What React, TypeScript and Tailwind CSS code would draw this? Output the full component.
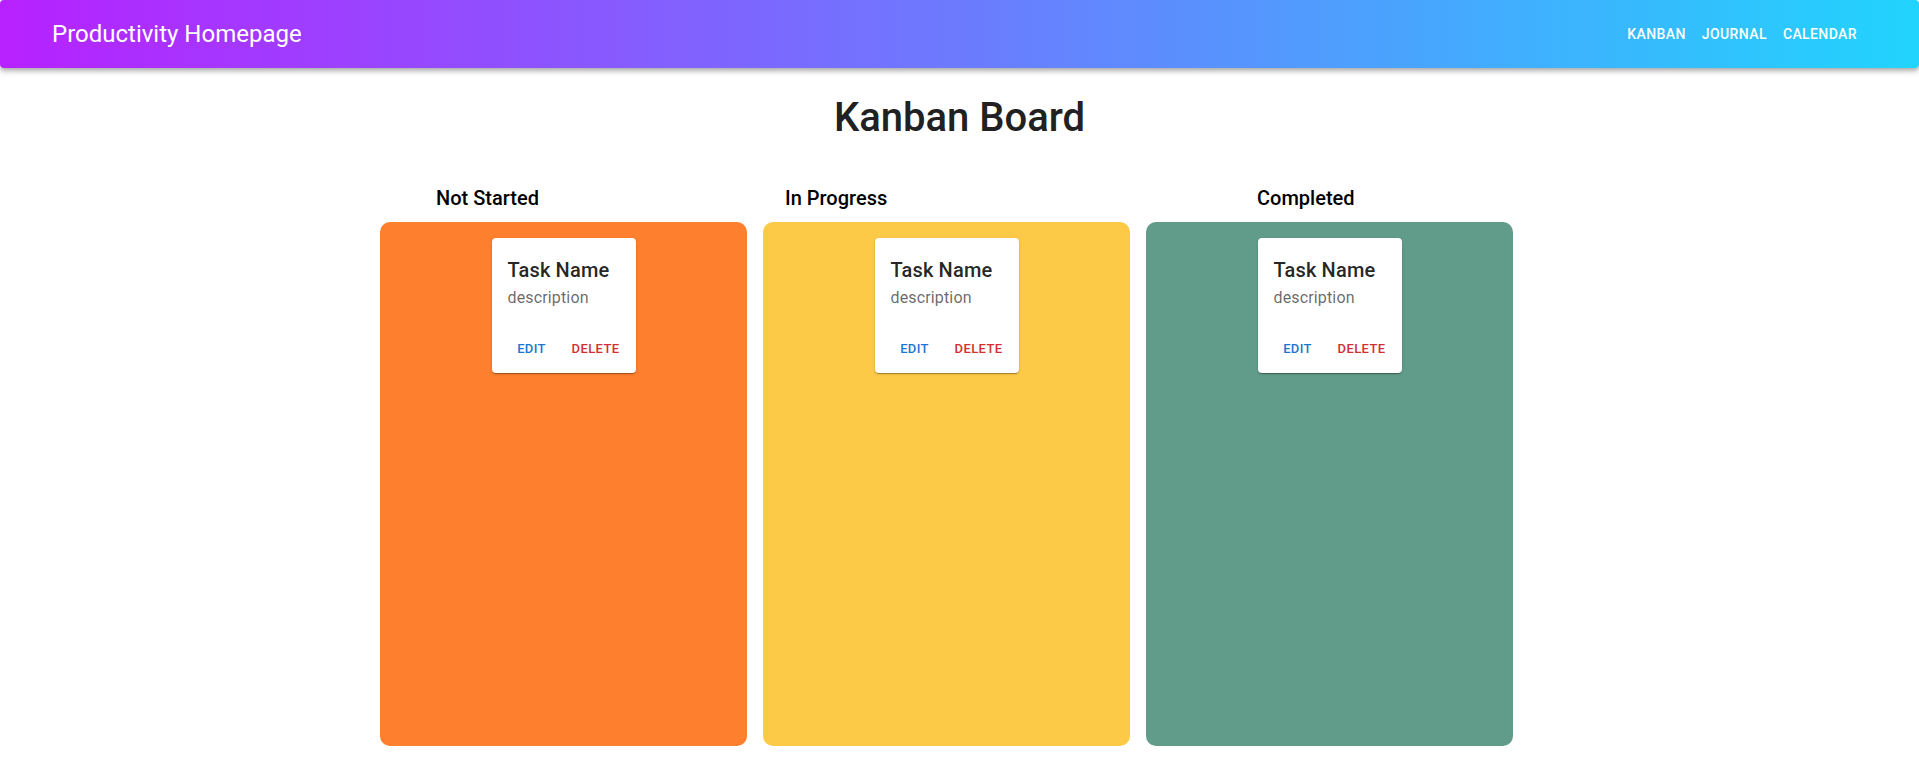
import React from "react";

type Column = {
  title: string;
  color: string;
  titleIndent: string;
};

const columns: Column[] = [
  { title: "Not Started", color: "bg-[#fe7f2d]", titleIndent: "pl-[56px]" },
  { title: "In Progress", color: "bg-[#fcca46]", titleIndent: "pl-[22px]" },
  { title: "Completed", color: "bg-[#619b8a]", titleIndent: "pl-[111px]" },
];

const navLinks = ["Kanban", "Journal", "Calendar"];

function TaskCard() {
  return (
    <div className="w-fit rounded-[4px] bg-white text-[rgba(0,0,0,0.87)] shadow-[0_2px_1px_-1px_rgba(0,0,0,0.2),0_1px_1px_0_rgba(0,0,0,0.14),0_1px_3px_0_rgba(0,0,0,0.12)]">
      <div className="p-4">
        <div className="text-[20px] leading-[32px] font-medium tracking-[0.15px]">
          Task Name
        </div>
        <div className="text-[16px] leading-[24px] tracking-[0.15px] text-[rgba(0,0,0,0.6)]">
          description
        </div>
      </div>
      <div className="flex items-center p-2">
        <button className="min-w-16 px-[5px] py-1 rounded-[4px] text-[13px] leading-[1.75] font-medium uppercase tracking-[0.37px] text-[#1976d2]">
          Edit
        </button>
        <button className="min-w-16 px-[5px] py-1 rounded-[4px] text-[13px] leading-[1.75] font-medium uppercase tracking-[0.37px] text-[#d32f2f]">
          Delete
        </button>
      </div>
    </div>
  );
}

export default function App() {
  return (
    <div className="min-h-[768px] bg-white font-['Roboto','Helvetica','Arial',sans-serif]">
      {/* top bar */}
      <header className="flex h-[68px] items-center justify-between rounded-[4px] bg-[linear-gradient(90deg,#b721ff,#21d4fd)] pl-[52px] pr-[54px] text-white shadow-[0_2px_4px_-1px_rgba(0,0,0,0.2),0_4px_5px_0_rgba(0,0,0,0.14),0_1px_10px_0_rgba(0,0,0,0.12)]">
        <div className="text-[24px] leading-[36px]">Productivity Homepage</div>
        <nav className="flex">
          {navLinks.map((link) => (
            <a
              key={link}
              href="#"
              className="px-2 py-[6px] text-[14px] leading-[1.75] font-medium uppercase tracking-[0.4px]"
            >
              {link}
            </a>
          ))}
        </nav>
      </header>

      <main>
        <h1 className="mt-[26px] text-center text-[40px] leading-[48px] font-medium text-[#212121]">
          Kanban Board
        </h1>

        <div className="mx-auto mt-[40px] flex w-[1159px] gap-4">
          {columns.map((col) => (
            <section key={col.title} className="flex w-[367px] flex-col">
              <h2
                className={`${col.titleIndent} mb-2 text-[20px] leading-[32px] font-medium text-black`}
              >
                {col.title}
              </h2>
              <div
                className={`${col.color} flex h-[524px] flex-col items-center rounded-[10px] pt-4`}
              >
                <TaskCard />
              </div>
            </section>
          ))}
        </div>
      </main>
    </div>
  );
}
